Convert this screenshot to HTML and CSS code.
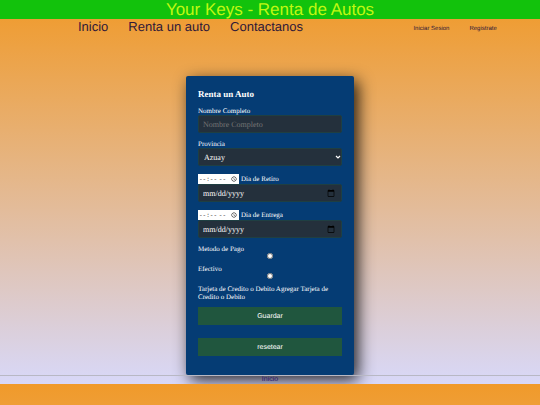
FILE: index.html
```html
<!DOCTYPE html>
<html lang="es">
<head>
    <meta charset="UTF-8">
    <title>Your Keys - Renta de Autos</title>
    <link rel="stylesheet" href="styles.css">
</head>
<body>
    <header class="titulo">Your Keys - Renta de Autos</header>

    <nav class="menu">
        <div class="menu-principal">
            <a href="#">Inicio</a>
            <a href="#">Renta un auto</a>
            <a href="#">Contactanos</a>
        </div>
        <div class="menu-usuario">
            <a href="#">Iniciar Sesion</a>
            <a href="#">Registrate</a>
        </div>
    </nav>

    <form class="formulario">
        <h4>Renta un Auto</h4>

        <label for="nombre">Nombre Completo</label>
        <input class="control" type="text" id="nombre" placeholder="Nombre Completo">

        <label for="provincia">Provincia</label>
        <select class="control" id="provincia">
            <option>Azuay</option>
            <option>Guayas</option>
            <option>Pichincha</option>
        </select>

        <div class="fila-hora">
            <input class="hora" type="time" aria-label="Hora de Retiro">
            <label for="retiro">Dia de Retiro</label>
        </div>
        <input class="control" type="date" id="retiro">

        <div class="fila-hora">
            <input class="hora" type="time" aria-label="Hora de Entrega">
            <label for="entrega">Dia de Entrega</label>
        </div>
        <input class="control" type="date" id="entrega">

        <label for="efectivo">Metodo de Pago</label>
        <input class="opcion" type="radio" name="pago" id="efectivo">
        <label for="efectivo">Efectivo</label>
        <input class="opcion" type="radio" name="pago" id="tarjeta">
        <label for="tarjeta">Tarjeta de Credito o Debito Agregar Tarjeta de Credito o Debito</label>

        <div class="botones">
            <button class="boton" type="submit">Guardar</button>
            <button class="boton" type="reset">resetear</button>
        </div>
    </form>

    <footer class="pie">
        <a href="#">Inicio</a>
    </footer>
</body>
</html>
```
FILE: styles.css
```css
* {
    box-sizing: border-box;
}

body {
    margin: 0;
    font-family: "Liberation Sans", Arial, sans-serif;
    text-rendering: geometricPrecision;
    background: linear-gradient(#f09a2a, #d8d8f8);
}

.titulo {
    background: #12c20c;
    color: #c0f812;
    font-size: 17px;
    line-height: 19px;
    text-align: center;
}

.menu {
    display: flex;
    justify-content: space-between;
    padding: 0 8% 0 78px;
    line-height: 15px;
}

.menu a {
    color: #301838;
    text-decoration: none;
}

.menu-principal {
    display: flex;
    gap: 20px;
    font-size: 13px;
}

.menu-usuario {
    display: flex;
    gap: 20px;
    padding-top: 3px;
    font-size: 6px;
}

/* formulario */
.formulario {
    width: 168px;
    margin: 39px auto 0;
    padding: 12px 12px 19px;
    background: #053c74;
    border-radius: 2px;
    box-shadow: 4px 5px 16px rgba(0, 0, 0, 0.85);
    color: #fff;
    font-family: "Liberation Serif", "Times New Roman", serif;
    font-size: 7px;
    line-height: 8px;
}

.formulario h4 {
    margin: 0 0 7px;
    font-size: 9px;
    line-height: 12px;
}

.formulario label {
    display: block;
}

.control {
    display: block;
    width: 100%;
    height: 18px;
    margin-bottom: 7px;
    padding: 4px;
    background: #24303c;
    border: 1px solid #1f3f42;
    border-radius: 2px;
    color: #fff;
    font-family: inherit;
    font-size: 8px;
    text-rendering: inherit;
}

.control::placeholder {
    color: #757575;
}

select.control {
    appearance: none;
    padding: 0 5px;
    background: #24303c url("data:image/svg+xml,%3Csvg xmlns='http://www.w3.org/2000/svg' viewBox='0 0 6 6'%3E%3Cpath d='M1 2l2 2 2-2' fill='none' stroke='white' stroke-width='1.2'/%3E%3C/svg%3E") no-repeat right 0 center / 6px 6px;
}

.fila-hora {
    display: flex;
    align-items: center;
    gap: 2px;
    margin-top: 8px;
}

.hora {
    width: 41px;
    height: 10px;
    padding: 0 1px;
    border: 0;
    background: #fff;
    color: #222;
    font-family: "Liberation Mono", monospace;
    font-size: 6px;
    text-rendering: inherit;
}

/* quitar el relleno interno de fecha y hora */
::-webkit-datetime-edit,
::-webkit-datetime-edit-fields-wrapper,
::-webkit-datetime-edit-hour-field,
::-webkit-datetime-edit-minute-field,
::-webkit-datetime-edit-ampm-field,
::-webkit-datetime-edit-month-field,
::-webkit-datetime-edit-day-field,
::-webkit-datetime-edit-year-field {
    padding: 0;
}

.hora::-webkit-calendar-picker-indicator {
    margin: 0;
    padding: 0 1px;
}

.opcion {
    display: block;
    width: 100%;
    height: 6px;
    margin: 0 0 6px;
}

.botones {
    display: grid;
    gap: 13px;
    margin-top: 6px;
}

.boton {
    height: 18px;
    padding: 0;
    background: #20563e;
    border: 0;
    color: #fff;
    font-family: "Liberation Sans", Arial, sans-serif;
    font-size: 7px;
    text-rendering: inherit;
}

/* el pie queda por encima de la sombra del formulario */
.pie {
    border-top: 1px solid #b8b8c4;
    font-size: 7px;
    line-height: 8px;
    text-align: center;
}

.pie a {
    color: #281470;
    text-decoration: none;
}
```
